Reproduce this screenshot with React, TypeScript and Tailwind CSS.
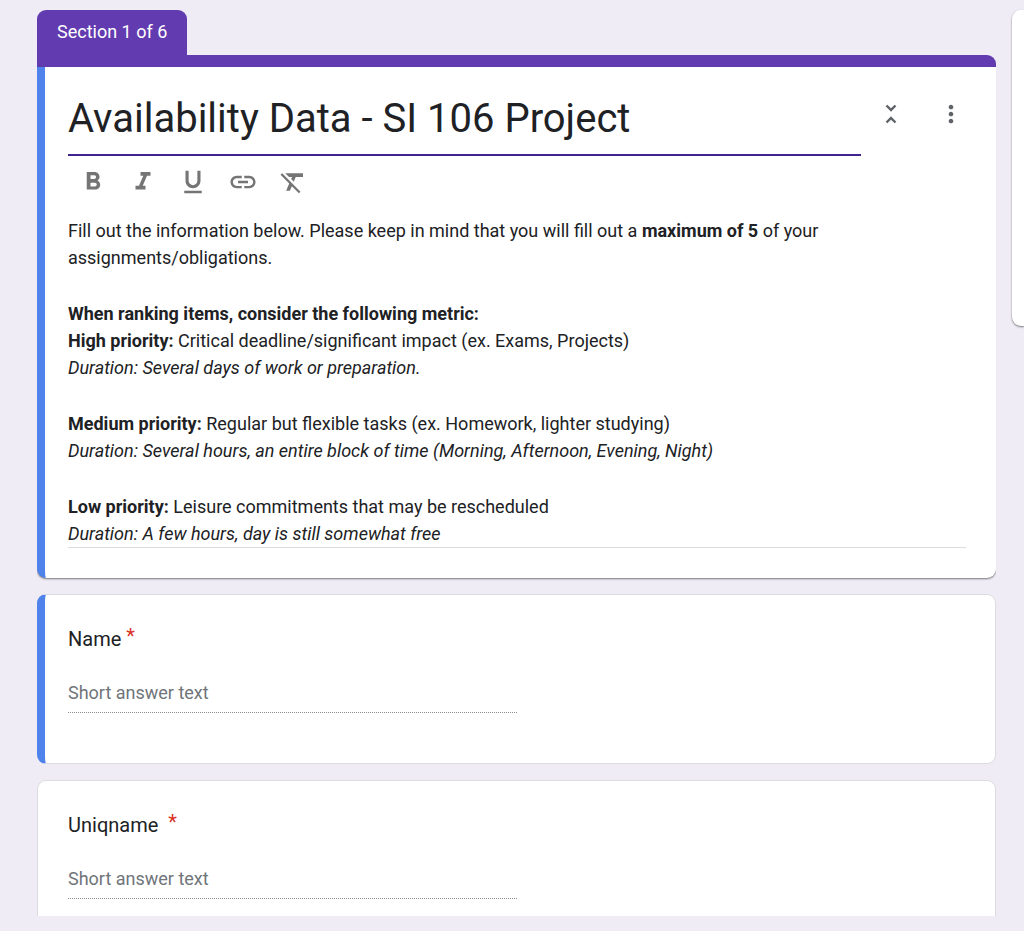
import { useState } from 'react';
import type { ReactNode } from 'react';
import { MdFormatBold, MdFormatClear, MdFormatItalic, MdFormatUnderlined, MdLink, MdMoreVert, MdUnfoldLess } from 'react-icons/md';

const formatButtons = [
  { label: 'Bold', icon: <MdFormatBold /> },
  { label: 'Italic', icon: <MdFormatItalic /> },
  { label: 'Underline', icon: <MdFormatUnderlined /> },
  { label: 'Insert link', icon: <MdLink /> },
  { label: 'Remove formatting', icon: <MdFormatClear /> },
];

const questions = [
  { id: 'name', title: 'Name', selected: true },
  { id: 'uniqname', title: 'Uniqname ', selected: false },
];

function IconButton({ label, children }: { label: string; children: ReactNode }) {
  return (
    <button
      type="button"
      aria-label={label}
      className="flex h-[30px] w-[30px] cursor-pointer items-center justify-center text-[28px] text-[#5f6368]"
    >
      {children}
    </button>
  );
}

function Priority({ name, text, duration }: { name: string; text: string; duration: string }) {
  return (
    <>
      <p>
        <b className="font-bold">{name} priority:</b> {text}
      </p>
      <p className="italic">Duration: {duration}</p>
    </>
  );
}

function SectionHeader() {
  const [title, setTitle] = useState('Availability Data - SI 106 Project');

  return (
    <section>
      <div className="flex">
        <div className="h-[45px] rounded-t-[9px] bg-[#633bb0] px-5 pt-[10px] text-[18px] leading-6 text-white">
          Section 1 of 6
        </div>
      </div>
      <div className="h-3 rounded-tr-[9px] bg-[#633bb0]" />
      <div className="rounded-b-[9px] border-l-8 border-[#4f82ea] bg-white pt-5 pr-[30px] pb-[30px] pl-[23px] shadow-[0_1px_2px_rgba(0,0,0,0.5)]">
        <div className="flex items-start">
          <input
            aria-label="Form title"
            value={title}
            onChange={(event) => setTitle(event.target.value)}
            className="h-[69px] min-w-0 flex-1 border-b-2 border-[#3f2390] pb-1 text-[40px] text-[#202124] outline-none"
          />
          <div className="flex gap-[30px] pt-3 pl-[15px]">
            <IconButton label="Collapse section">
              <MdUnfoldLess />
            </IconButton>
            <IconButton label="More options">
              <MdMoreVert />
            </IconButton>
          </div>
        </div>

        {/* Formatting toolbar */}
        <div className="flex gap-5 pt-[11px] pl-[10px]">
          {formatButtons.map((button) => (
            <button
              key={button.label}
              type="button"
              aria-label={button.label}
              className="flex h-[30px] w-[30px] cursor-pointer items-center justify-center text-[30px] text-[#757575]"
            >
              {button.icon}
            </button>
          ))}
        </div>

        {/* Description */}
        <div className="mt-5 flex flex-col gap-[29px] border-b border-[#dadce0] text-[18px] leading-[27px] text-[#202124]">
          <p>
            Fill out the information below. Please keep in mind that you will fill out a{' '}
            <b className="font-bold">maximum of 5</b> of your assignments/obligations.
          </p>
          <div>
            <p className="font-bold">When ranking items, consider the following metric:</p>
            <Priority
              name="High"
              text="Critical deadline/significant impact (ex. Exams, Projects)"
              duration="Several days of work or preparation."
            />
          </div>
          <div>
            <Priority
              name="Medium"
              text="Regular but flexible tasks (ex. Homework, lighter studying)"
              duration="Several hours, an entire block of time (Morning, Afternoon, Evening, Night)"
            />
          </div>
          <div>
            <Priority
              name="Low"
              text="Leisure commitments that may be rescheduled"
              duration="A few hours, day is still somewhat free"
            />
          </div>
        </div>
      </div>
    </section>
  );
}

function QuestionCard({ id, title, selected }: { id: string; title: string; selected: boolean }) {
  return (
    <section
      className={`rounded-[9px] border border-[#dadce0] bg-white pt-[29px] pr-[30px] pb-[50px] ${
        selected ? 'border-l-8 border-l-[#4f82ea] pl-[23px]' : 'pl-[30px]'
      }`}
    >
      <label htmlFor={id} className="flex text-[20px] leading-[30px] whitespace-pre text-[#202124]">
        {title} <span className="leading-6 text-[#d93025]">*</span>
      </label>
      <input
        id={id}
        type="text"
        placeholder="Short answer text"
        className="mt-[19px] block h-10 w-1/2 border-b border-dotted border-[#8c8c90] text-[18px] outline-none placeholder:text-[#70757a]"
      />
    </section>
  );
}

export default function App() {
  return (
    <div className="flex h-screen items-start gap-4 overflow-hidden bg-[#efecf6] pt-[10px] pb-[15px] pl-[37px] font-[Roboto,sans-serif]">
      <main className="flex max-h-full min-w-0 flex-1 flex-col gap-4 overflow-hidden">
        <SectionHeader />
        {questions.map((question) => (
          <QuestionCard key={question.id} {...question} />
        ))}
      </main>
      {/* Edge of the floating tool rail */}
      <aside className="h-[316px] w-3 rounded-l-[9px] bg-white shadow-[0_1px_2px_rgba(0,0,0,0.5)]" />
    </div>
  );
}
